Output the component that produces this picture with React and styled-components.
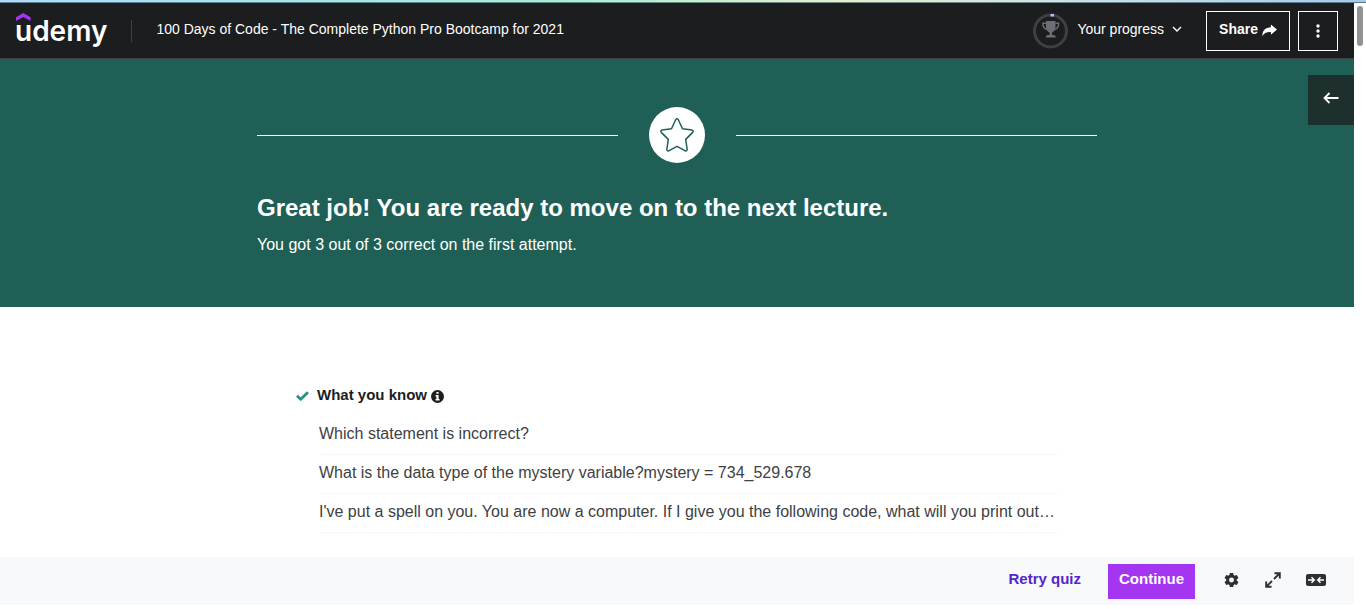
import React from 'react';
import styled, { createGlobalStyle } from 'styled-components';

const GlobalStyle = createGlobalStyle`
  *, *::before, *::after { box-sizing: border-box; }
  body {
    margin: 0;
    background: #fff;
    color: #1c1d1f;
    font-family: "Liberation Sans", Arial, sans-serif;
    font-size: 16px;
    line-height: 24px;
  }
  h1, h2, p, ul { margin: 0; padding: 0; }
  button {
    font: inherit;
    color: inherit;
    background: none;
    border: 0;
    padding: 0;
    cursor: pointer;
  }
  svg { display: block; flex: none; }
`;

const Page = styled.div`
  min-height: 100vh;
  padding-bottom: 4px;
  display: flex;
  flex-direction: column;
`;

const TopStrip = styled.div`
  height: 3px;
  border-bottom: 1px solid rgba(30, 70, 90, 0.6);
  background: linear-gradient(90deg, #b4d8f8, #a9e6e2 25%, #b0ecd0 42%, #e8eecb 62%, #c8dfe4 82%, #a9c8e6);
`;

const Viewport = styled.div`
  flex: 1;
  display: flex;
`;

const Course = styled.div`
  flex: 1;
  min-width: 0;
  display: flex;
  flex-direction: column;
`;

const ScrollTrack = styled.div`
  width: 12px;
  padding: 3px;
`;

const ScrollThumb = styled.div`
  height: 40px;
  border-radius: 3px;
  background: #929292;
`;

const Header = styled.header`
  height: 56px;
  padding: 0 16px 0 15px;
  display: flex;
  align-items: center;
  background: #1c1d1f;
  border-bottom: 1px solid #3e4143;
  color: #fff;
  font-size: 14px;
`;

const Logo = styled.a`
  position: relative;
  color: #fff;
  text-decoration: none;
  font-family: Inter, sans-serif;
  font-size: 28px;
  font-weight: 600;
  line-height: 40px;

  svg { position: absolute; left: 1px; top: 2px; }
`;

const Divider = styled.div`
  width: 1px;
  height: 22px;
  margin: 0 24px;
  background: #3e4143;
`;

const CourseTitle = styled.a`
  flex: 1;
  padding-bottom: 4px;
  color: #fff;
  text-decoration: none;
`;

const Label = styled.span`
  padding-bottom: 4px;
`;

const ProgressButton = styled.button`
  display: flex;
  align-items: center;
  gap: 8px;
  margin-right: 24px;

  svg:last-child { margin-bottom: 4px; }
`;

const OutlineButton = styled.button`
  height: 40px;
  min-width: 40px;
  padding: 0 ${p => (p.$square ? 0 : 12)}px;
  margin-left: ${p => (p.$square ? 8 : 0)}px;
  display: flex;
  align-items: center;
  justify-content: center;
  gap: 4px;
  border: 1px solid #fff;
  font-weight: 700;
`;

const Result = styled.section`
  position: relative;
  height: 248px;
  padding: 48px 24px 0;
  background: #205f56;
  color: #fff;
`;

const ResultInner = styled.div`
  max-width: 840px;
  margin: 0 auto;
`;

const StarRow = styled.div`
  display: flex;
  align-items: center;
  gap: 31px;
  margin-bottom: 29px;

  &::before, &::after {
    content: "";
    flex: 1;
    height: 1px;
    background: #fff;
  }
`;

const StarBadge = styled.div`
  width: 56px;
  height: 56px;
  border-radius: 50%;
  background: #fff;
  display: grid;
  place-items: center;
`;

const ResultTitle = styled.h1`
  font-size: 24px;
  line-height: 32px;
  margin-bottom: 9px;
`;

const OpenSidebar = styled.button`
  position: absolute;
  right: 0;
  top: 16px;
  width: 46px;
  height: 50px;
  padding-bottom: 4px;
  display: grid;
  place-items: center;
  background: #1e302e;
`;

const Summary = styled.section`
  flex: 1;
  width: 100%;
  max-width: 762px;
  margin: 0 auto;
  padding-top: 76px;
`;

const SummaryTitle = styled.h2`
  display: flex;
  align-items: center;
  font-size: 15px;
  line-height: 24px;
  gap: 4px;

  svg { margin-top: 2px; }
  svg:first-child { margin-right: 4px; }
`;

const Questions = styled.ul`
  list-style: none;
  margin: 9px 0 24px 23px;
`;

const Question = styled.li`
  padding: 6px 0 8px;
  border-bottom: 1px solid #f5f6f7;
  color: #3e4143;
`;

const Footer = styled.footer`
  height: 48px;
  padding: 0 28px;
  display: flex;
  align-items: center;
  justify-content: flex-end;
  background: #f7f9fa;
  color: #2d2f31;
  font-size: 15px;
`;

const ActionButton = styled.button`
  height: 35px;
  padding: 0 11px 4px;
  margin-right: ${p => (p.$primary ? 28 : 16)}px;
  font-weight: 700;
  color: ${p => (p.$primary ? '#fff' : '#5624d0')};
  background: ${p => (p.$primary ? '#a435f0' : 'transparent')};
`;

const IconGroup = styled.div`
  display: flex;
  gap: 25px;
  padding-bottom: 3px;
`;

const IconButton = styled.button`
  display: grid;
  place-items: center;
`;

const questions = [
  'Which statement is incorrect?',
  'What is the data type of the mystery variable?mystery = 734_529.678',
  "I've put a spell on you. You are now a computer. If I give you the following code, what will you print out…",
];

const ProgressRing = () => (
  <svg width="36" height="36" viewBox="0 0 36 36" fill="none">
    <circle cx="17.5" cy="18" r="16" stroke="#3e4143" strokeWidth="3" />
    <path d="M17.500 2.200h3.500" stroke="#c0b4f5" strokeWidth="2.600" />
    <path d="M13 8h9.500v5.500c0 3.500-1.700 5.300-3.500 6.200v2.300h1.500c1.500 0 2.300.9 2.300 2.500H12.800c0-1.600.8-2.500 2.300-2.500h1.500v-2.300c-1.900-.9-3.600-2.700-3.600-6.200z" fill="#6a6f73" />
    <path d="M13 10.300H9.800c0 3.700 1.700 5.800 4.700 6.200M22.500 10.300h3.200c0 3.700-1.700 5.800-4.700 6.200" stroke="#6a6f73" strokeWidth="1.400" />
  </svg>
);

export default function App() {
  return (
    <>
      <GlobalStyle />
      <Page>
        <TopStrip />
        <Viewport>
          <Course>
            <Header>
              <Logo href="#">
                <svg width="15" height="8" viewBox="0 0 15 8">
                  <path d="M0 4.200 7.300 0l7.300 4.200V8L7.300 4 0 8z" fill="#a435f0" />
                </svg>
                udemy
              </Logo>
              <Divider />
              <CourseTitle href="#">100 Days of Code - The Complete Python Pro Bootcamp for 2021</CourseTitle>
              <ProgressButton>
                <ProgressRing />
                <Label>Your progress</Label>
                <svg width="10" height="6" viewBox="0 0 10 6" fill="none" stroke="#fff" strokeWidth="1.400">
                  <path d="m1 1 4 4 4-4" />
                </svg>
              </ProgressButton>
              <OutlineButton>
                <Label>Share</Label>
                <svg width="15" height="13" viewBox="0 0 16 13" fill="#fff">
                  <path d="M9.500 0 16 5.500 9.500 11V8C5 7.800 2 9 .5 12.500 0 7 3.500 3.200 9.500 3z" />
                </svg>
              </OutlineButton>
              <OutlineButton $square aria-label="More options">
                <svg width="4" height="14" viewBox="0 0 4 14" fill="#fff">
                  <circle cx="2" cy="2" r="1.700" />
                  <circle cx="2" cy="7" r="1.700" />
                  <circle cx="2" cy="12" r="1.700" />
                </svg>
              </OutlineButton>
            </Header>
            <Result>
              <ResultInner>
                <StarRow>
                  <StarBadge>
                    <svg width="36" height="36" viewBox="0 0 36 36" fill="none" stroke="#205f56" strokeWidth="1.500" strokeLinejoin="round">
                      <path d="M16.700 2.800q1.300-2 2.600 0l4.200 9 9.500 1.300q2 .6.700 2.300l-7 7 1.500 10.300q-.4 1.800-2.300 1L18 29.300l-7.900 4.400q-1.900.8-2.300-1l1.500-10.300-7-7q-1.300-1.700.7-2.300l9.500-1.300z" />
                    </svg>
                  </StarBadge>
                </StarRow>
                <ResultTitle>Great job! You are ready to move on to the next lecture.</ResultTitle>
                <p>You got 3 out of 3 correct on the first attempt.</p>
              </ResultInner>
              <OpenSidebar aria-label="Open course content">
                <svg width="16" height="12" viewBox="0 0 16 12" fill="none" stroke="#fff" strokeWidth="1.800">
                  <path d="M15.500 6H1.500M6.500 1l-5 5 5 5" />
                </svg>
              </OpenSidebar>
            </Result>
            <Summary>
              <SummaryTitle>
                <svg width="13" height="10" viewBox="0 0 13 10" fill="none" stroke="#26917f" strokeWidth="2.800">
                  <path d="m1 4.800 3.700 3.400L12 1.200" />
                </svg>
                What you know
                <svg width="13" height="13" viewBox="0 0 12 12">
                  <circle cx="6" cy="6" r="6" fill="#1c1d1f" />
                  <path d="M5 1.800h2v1.700H5zM4.200 4.600H7v3.700h.9v1.500H4.200V8.300H5V6.100h-.8z" fill="#fff" />
                </svg>
              </SummaryTitle>
              <Questions>
                {questions.map(q => <Question key={q}>{q}</Question>)}
              </Questions>
            </Summary>
            <Footer>
              <ActionButton>Retry quiz</ActionButton>
              <ActionButton $primary>Continue</ActionButton>
              <IconGroup>
                <IconButton aria-label="Settings">
                  <svg width="17" height="18" viewBox="0 0 24 24" fill="currentColor">
                    <path d="M19.430 12.980c.04-.32.070-.64.070-.98s-.03-.66-.07-.98l2.110-1.650c.19-.15.240-.42.120-.64l-2-3.460c-.12-.22-.39-.3-.61-.22l-2.490 1c-.52-.4-1.080-.73-1.690-.98l-.38-2.650A.488.488 0 0 0 14 2h-4c-.25 0-.46.180-.49.420l-.38 2.650c-.61.250-1.170.590-1.690.980l-2.490-1c-.23-.09-.49 0-.61.220l-2 3.460c-.13.220-.07.490.120.640l2.110 1.650c-.04.320-.07.650-.07.980s.03.660.070.980l-2.110 1.650c-.19.150-.24.420-.12.640l2 3.460c.12.220.390.300.610.220l2.490-1c.52.400 1.080.730 1.690.980l.38 2.650c.03.240.240.420.490.420h4c.25 0 .460-.18.490-.42l.38-2.650c.61-.25 1.170-.59 1.690-.98l2.490 1c.23.090.490 0 .610-.22l2-3.460c.12-.22.070-.49-.12-.64zM12 15.500a3.500 3.500 0 1 1 0-7 3.500 3.500 0 0 1 0 7z" />
                  </svg>
                </IconButton>
                <IconButton aria-label="Fullscreen">
                  <svg width="16" height="16" viewBox="0 0 16 16" fill="none" stroke="currentColor" strokeWidth="1.900">
                    <path d="M9.500 1.200h5.300v5.300M14.800 1.200 9 7M1.200 9.500v5.300h5.300M1.200 14.800 7 9" />
                  </svg>
                </IconButton>
                <IconButton aria-label="Exit expanded view">
                  <svg width="20" height="12" viewBox="0 0 20 12">
                    <rect width="20" height="12" rx="2" fill="currentColor" />
                    <path d="M2 6h6M5.500 3.200 8.300 6 5.500 8.800M18 6h-6M14.500 3.200 11.700 6l2.800 2.800" fill="none" stroke="#fff" strokeWidth="1.500" />
                  </svg>
                </IconButton>
              </IconGroup>
            </Footer>
          </Course>
          <ScrollTrack><ScrollThumb /></ScrollTrack>
        </Viewport>
      </Page>
    </>
  );
}
